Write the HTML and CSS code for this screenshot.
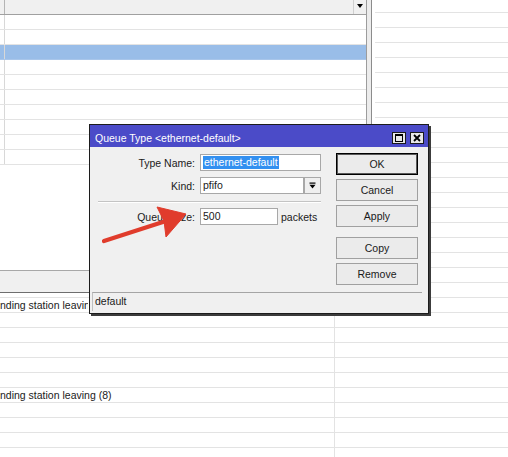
FILE: index.html
```html
<!DOCTYPE html>
<html>
<head>
<meta charset="utf-8">
<link rel="stylesheet" href="styles.css">
</head>
<body>
<div class="bg-list">
  <div class="bg-row first"><div class="bg-cell"></div><div class="bg-cell rest"></div></div>
  <div class="bg-row"><div class="bg-cell"></div><div class="bg-cell rest"></div></div>
  <div class="bg-row"><div class="bg-cell"></div><div class="bg-cell rest"></div></div>
  <div class="bg-row"><div class="bg-cell"></div><div class="bg-cell rest"></div></div>
  <div class="bg-row"><div class="bg-cell"></div><div class="bg-cell rest"></div></div>
  <div class="bg-row"><div class="bg-cell"></div><div class="bg-cell rest"></div></div>
  <div class="bg-row"><div class="bg-cell"></div><div class="bg-cell rest"></div></div>
  <div class="bg-row"><div class="bg-cell"></div><div class="bg-cell rest"></div></div>
  <div class="bg-row"><div class="bg-cell"></div><div class="bg-cell rest"></div></div>
  <div class="bg-row"><div class="bg-cell"></div><div class="bg-cell rest"></div></div>
  <div class="bg-row"><div class="bg-cell"></div><div class="bg-cell rest"></div></div>
  <div class="bg-row"><div class="bg-cell"></div><div class="bg-cell rest"></div></div>
  <div class="bg-row"><div class="bg-cell"></div><div class="bg-cell rest"></div></div>
  <div class="bg-row"><div class="bg-cell"></div><div class="bg-cell rest"></div></div>
  <div class="bg-row"><div class="bg-cell"></div><div class="bg-cell rest"></div></div>
  <div class="bg-row"><div class="bg-cell"></div><div class="bg-cell rest"></div></div>
  <div class="bg-row"><div class="bg-cell"></div><div class="bg-cell rest"></div></div>
  <div class="bg-row"><div class="bg-cell"></div><div class="bg-cell rest"></div></div>
  <div class="bg-row"><div class="bg-cell"></div><div class="bg-cell rest"></div></div>
  <div class="bg-row"><div class="bg-cell"></div><div class="bg-cell rest"></div></div>
  <div class="bg-row"><div class="bg-cell"><span class="clip">nding station leavin</span></div><div class="bg-cell rest"></div></div>
  <div class="bg-row"><div class="bg-cell"></div><div class="bg-cell rest"></div></div>
  <div class="bg-row"><div class="bg-cell"></div><div class="bg-cell rest"></div></div>
  <div class="bg-row"><div class="bg-cell"></div><div class="bg-cell rest"></div></div>
  <div class="bg-row"><div class="bg-cell"></div><div class="bg-cell rest"></div></div>
  <div class="bg-row"><div class="bg-cell"></div><div class="bg-cell rest"></div></div>
  <div class="bg-row"><div class="bg-cell">nding station leaving (8)</div><div class="bg-cell rest"></div></div>
  <div class="bg-row"><div class="bg-cell"></div><div class="bg-cell rest"></div></div>
  <div class="bg-row"><div class="bg-cell"></div><div class="bg-cell rest"></div></div>
  <div class="bg-row"><div class="bg-cell"></div><div class="bg-cell rest"></div></div>
  <div class="bg-row"><div class="bg-cell"></div><div class="bg-cell rest"></div></div>
</div>

<div class="list-win">
  <div class="lw-main">
    <div class="lw-header">
      <div class="lw-hfirst"></div>
      <div class="lw-hfill"></div>
      <div class="lw-hdrop"><span class="tri-down"></span></div>
    </div>
    <div class="lw-row"><div class="lw-first"></div></div>
    <div class="lw-row"><div class="lw-first"></div></div>
    <div class="lw-row selected"><div class="lw-first"></div></div>
    <div class="lw-row"><div class="lw-first"></div></div>
    <div class="lw-row"><div class="lw-first"></div></div>
    <div class="lw-row"><div class="lw-first"></div></div>
    <div class="lw-row"><div class="lw-first"></div></div>
    <div class="lw-row"><div class="lw-first"></div></div>
    <div class="lw-row"><div class="lw-first"></div></div>
    <div class="lw-row"><div class="lw-first"></div></div>
    <div class="lw-filler"></div>
    <div class="lw-status"></div>
  </div>
  <div class="lw-vbar"></div>
</div>

<div class="dialog">
  <div class="dlg-title">
    <span class="dlg-title-text">Queue Type &lt;ethernet-default&gt;</span>
    <span class="tb-btn">
      <svg width="8" height="8" viewBox="0 0 8 8"><rect x="0.5" y="0.5" width="7" height="7" fill="none" stroke="#000" stroke-width="1"/><rect x="0" y="0" width="8" height="2" fill="#000"/></svg>
    </span>
    <span class="tb-btn">
      <svg width="8" height="8" viewBox="0 0 8 8"><path d="M1 1 L7 7 M7 1 L1 7" stroke="#000" stroke-width="1.8"/></svg>
    </span>
  </div>
  <div class="dlg-body">
    <div class="dlg-form">
      <div class="f-row">
        <label class="f-label">Type Name:</label>
        <div class="f-input w-name"><span class="sel-text">ethernet-default</span></div>
      </div>
      <div class="f-row">
        <label class="f-label">Kind:</label>
        <div class="f-input w-kind">pfifo</div>
        <div class="f-drop">
          <svg width="7" height="7" viewBox="0 0 7 7"><rect x="0.5" y="0.5" width="6" height="1.2" fill="#000"/><polygon points="0.5,2.8 6.5,2.8 3.5,6.4" fill="#000"/></svg>
        </div>
      </div>
      <div class="f-sep"></div>
      <div class="f-row">
        <label class="f-label">Queue Size:</label>
        <div class="f-input w-size">500</div>
        <span class="f-unit">packets</span>
      </div>
    </div>
    <div class="dlg-buttons">
      <div class="btn default">OK</div>
      <div class="btn">Cancel</div>
      <div class="btn">Apply</div>
      <div class="btn group">Copy</div>
      <div class="btn">Remove</div>
    </div>
  </div>
  <div class="dlg-status">default</div>
</div>

<svg class="arrow" width="508" height="457" viewBox="0 0 508 457">
  <line x1="104" y1="241" x2="166" y2="221" stroke="#e03c2c" stroke-width="4.2" stroke-linecap="round"/>
  <polygon points="186,214 157,207 164,221 166,237" fill="#e03c2c" stroke="#e03c2c" stroke-width="1" stroke-linejoin="round"/>
</svg>
</body>
</html>
```

FILE: styles.css
```css
* { box-sizing: border-box; }
html, body { margin: 0; padding: 0; }
body {
  width: 508px;
  height: 457px;
  overflow: hidden;
  position: relative;
  background: #fff;
  font-family: "Liberation Sans", Arial, sans-serif;
  font-size: 10.5px;
  color: #1a1a1a;
}

/* background list */
.bg-row {
  display: flex;
  height: 15px;
  border-bottom: 1px solid #e3e3e3;
}
.bg-row.first { height: 13px; }
.bg-cell {
  width: 335px;
  border-right: 1px solid #e3e3e3;
  line-height: 14px;
  white-space: nowrap;
  overflow: hidden;
  padding-left: 0;
}
.bg-cell.rest { flex: 1; border-right: none; }
.clip {
  display: inline-block;
  width: 88px;
  overflow: hidden;
  vertical-align: top;
}

/* upper list window */
.list-win {
  position: absolute;
  left: 0;
  top: 0;
  width: 375px;
  height: 293px;
  display: flex;
  background: #fff;
  border-right: 3px solid #fff;
}
.lw-main {
  width: 366px;
  display: flex;
  flex-direction: column;
}
.lw-vbar {
  width: 6px;
  background: #ececec;
  border-left: 1px solid #9c9c9c;
  border-right: 1px solid #8c8c8c;
}
.lw-header {
  height: 15px;
  display: flex;
  background: #f0f0f0;
  border-bottom: 1px solid #a0a0a0;
}
.lw-hfirst { width: 5px; border-right: 1px solid #b4b4b4; }
.lw-hfill { flex: 1; }
.lw-hdrop {
  width: 13px;
  border-left: 1px solid #cfcfcf;
  display: flex;
  justify-content: center;
  padding-top: 4px;
}
.tri-down {
  width: 0;
  height: 0;
  border-left: 3.5px solid transparent;
  border-right: 3.5px solid transparent;
  border-top: 4px solid #000;
}
.lw-row {
  height: 15px;
  display: flex;
  border-bottom: 1px solid #e3e3e3;
}
.lw-row.selected {
  background: #99bde8;
  border-bottom-color: #a9c6ea;
}
.lw-first { width: 5px; border-right: 1px solid #d8d8d8; }
.lw-filler { flex: 1; }
.lw-status {
  height: 23px;
  background: #f0f0f0;
  border-top: 1px solid #a8a8a8;
  border-bottom: 1px solid #6e6e6e;
}

/* dialog */
.dialog {
  position: absolute;
  left: 89px;
  top: 124px;
  width: 340px;
  height: 190px;
  border: 1px solid #1c1c1c;
  box-shadow: 2px 2px 0 #3c3c3c;
  background: #f0f0f0;
  display: flex;
  flex-direction: column;
}
.dlg-title {
  height: 22px;
  background: #4b4bc8;
  display: flex;
  align-items: center;
  padding: 3px 4px 0 5px;
}
.dlg-title-text {
  flex: 1;
  color: #fff;
  white-space: nowrap;
}
.tb-btn {
  width: 14px;
  height: 12px;
  margin-left: 4px;
  border: 1px solid #1a1a1a;
  background: #e8e8e8;
  display: flex;
  align-items: center;
  justify-content: center;
}
.dlg-body {
  flex: 1;
  display: flex;
  padding: 7px 10px 0 0;
}
.dlg-form {
  width: 231px;
  display: flex;
  flex-direction: column;
}
.f-row {
  display: flex;
  align-items: center;
  height: 17px;
  margin-bottom: 6px;
}
.f-label {
  width: 110px;
  padding-right: 5px;
  text-align: right;
  white-space: nowrap;
}
.f-input {
  height: 17px;
  background: #fff;
  border: 1px solid #a8a8a8;
  padding-left: 2px;
  line-height: 15px;
  white-space: nowrap;
}
.w-name { width: 121px; }
.w-kind { width: 104px; }
.w-size { width: 78px; }
.sel-text {
  background: #3390f0;
  color: #fff;
  padding: 0 1px 1px 1px;
}
.f-drop {
  width: 17px;
  height: 17px;
  border: 1px solid #a8a8a8;
  background: #efefef;
  display: flex;
  align-items: center;
  justify-content: center;
}
.f-sep {
  margin: 1px 0 5px 8px;
  height: 2px;
  border-top: 1px solid #c4c4c4;
  border-bottom: 1px solid #fff;
}
.f-unit { margin-left: 3px; }

.dlg-buttons {
  width: 82px;
  margin-left: 15px;
  margin-top: -1px;
  display: flex;
  flex-direction: column;
}
.btn {
  height: 22px;
  margin-bottom: 4px;
  border: 1px solid #a0a0a0;
  background: #ebebeb;
  display: flex;
  align-items: center;
  justify-content: center;
}
.btn.default {
  border: 1px solid #000;
  box-shadow: inset 0 0 0 1px #5a5a5a;
}
.btn.group { margin-top: 6px; }

.dlg-status {
  height: 19px;
  margin: 0 6px 2px 2px;
  border-top: 1px solid #a5a5a5;
  border-left: 1px solid #c0c0c0;
  padding-left: 2px;
  line-height: 17px;
}

.arrow {
  position: absolute;
  left: 0;
  top: 0;
  pointer-events: none;
}
```
